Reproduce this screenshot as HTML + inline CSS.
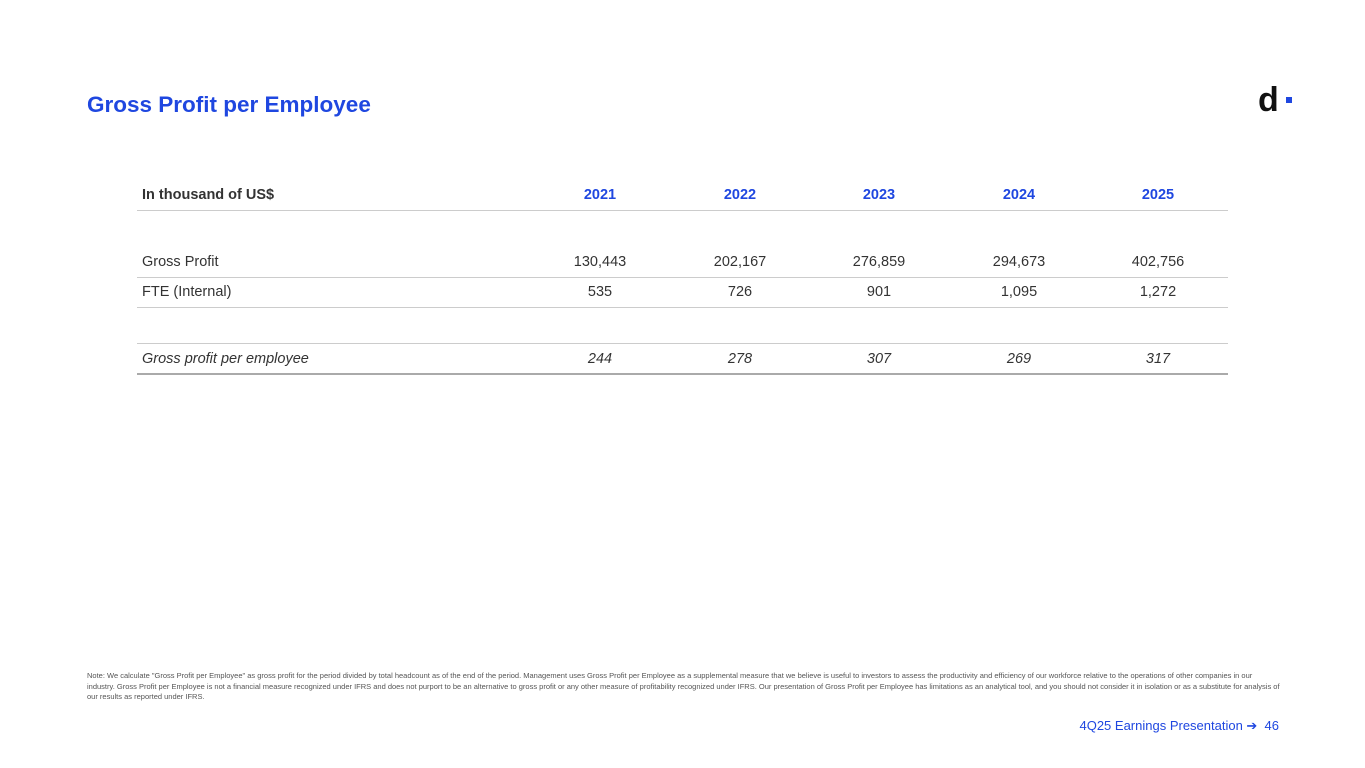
<!DOCTYPE html>
<html><head><meta charset="utf-8"><style>
*{margin:0;padding:0;box-sizing:border-box}
body{width:1365px;height:768px;background:#fff;position:relative;font-family:"Liberation Sans",sans-serif;overflow:hidden}
.t{position:absolute;left:87px;top:92px;font-size:22.5px;font-weight:bold;color:#1f47e0;letter-spacing:0px}
.logo{position:absolute;left:1258px;top:81px;font-size:34px;font-weight:bold;color:#111}
.dot{position:absolute;left:1286px;top:97px;width:6px;height:6px;background:#1f47e0}
.row{position:absolute;left:137px;width:1091px;font-size:14.5px;color:#333}
.row span{position:absolute;top:0;width:140px;text-align:center}
.row .l{left:5px;width:auto;text-align:left}
.line{position:absolute;left:137px;width:1091px;height:1px;background:#ccc}
.note{position:absolute;left:87px;top:671px;width:1195px;font-size:7.5px;line-height:10.5px;color:#555}
.foot{position:absolute;right:86px;top:718px;font-size:13px;color:#1f47e0}
</style></head><body>
<div class="t">Gross Profit per Employee</div>
<div class="logo">d</div><div class="dot"></div>
<div class="row" style="top:187px;font-weight:bold"><span class="l" style="color:#333">In thousand of US$</span><span style="left:393px;color:#1f47e0">2021</span><span style="left:533px;color:#1f47e0">2022</span><span style="left:672px;color:#1f47e0">2023</span><span style="left:812px;color:#1f47e0">2024</span><span style="left:951px;color:#1f47e0">2025</span></div>
<div class="line" style="top:210px"></div>
<div class="row" style="top:254px"><span class="l">Gross Profit</span><span style="left:393px">130,443</span><span style="left:533px">202,167</span><span style="left:672px">276,859</span><span style="left:812px">294,673</span><span style="left:951px">402,756</span></div>
<div class="line" style="top:277px"></div>
<div class="row" style="top:284px"><span class="l">FTE (Internal)</span><span style="left:393px">535</span><span style="left:533px">726</span><span style="left:672px">901</span><span style="left:812px">1,095</span><span style="left:951px">1,272</span></div>
<div class="line" style="top:307px"></div>
<div class="line" style="top:343px"></div>
<div class="row" style="top:351px;font-style:italic"><span class="l">Gross profit per employee</span><span style="left:393px">244</span><span style="left:533px">278</span><span style="left:672px">307</span><span style="left:812px">269</span><span style="left:951px">317</span></div>
<div class="line" style="top:373px;height:2px;background:#aaa"></div>
<div class="note">Note: We calculate "Gross Profit per Employee" as gross profit for the period divided by total headcount as of the end of the period. Management uses Gross Profit per Employee as a supplemental measure that we believe is useful to investors to assess the productivity and efficiency of our workforce relative to the operations of other companies in our industry. Gross Profit per Employee is not a financial measure recognized under IFRS and does not purport to be an alternative to gross profit or any other measure of profitability recognized under IFRS. Our presentation of Gross Profit per Employee has limitations as an analytical tool, and you should not consider it in isolation or as a substitute for analysis of our results as reported under IFRS.</div>
<div class="foot">4Q25 Earnings Presentation ➔ &nbsp;46</div>
</body></html>
